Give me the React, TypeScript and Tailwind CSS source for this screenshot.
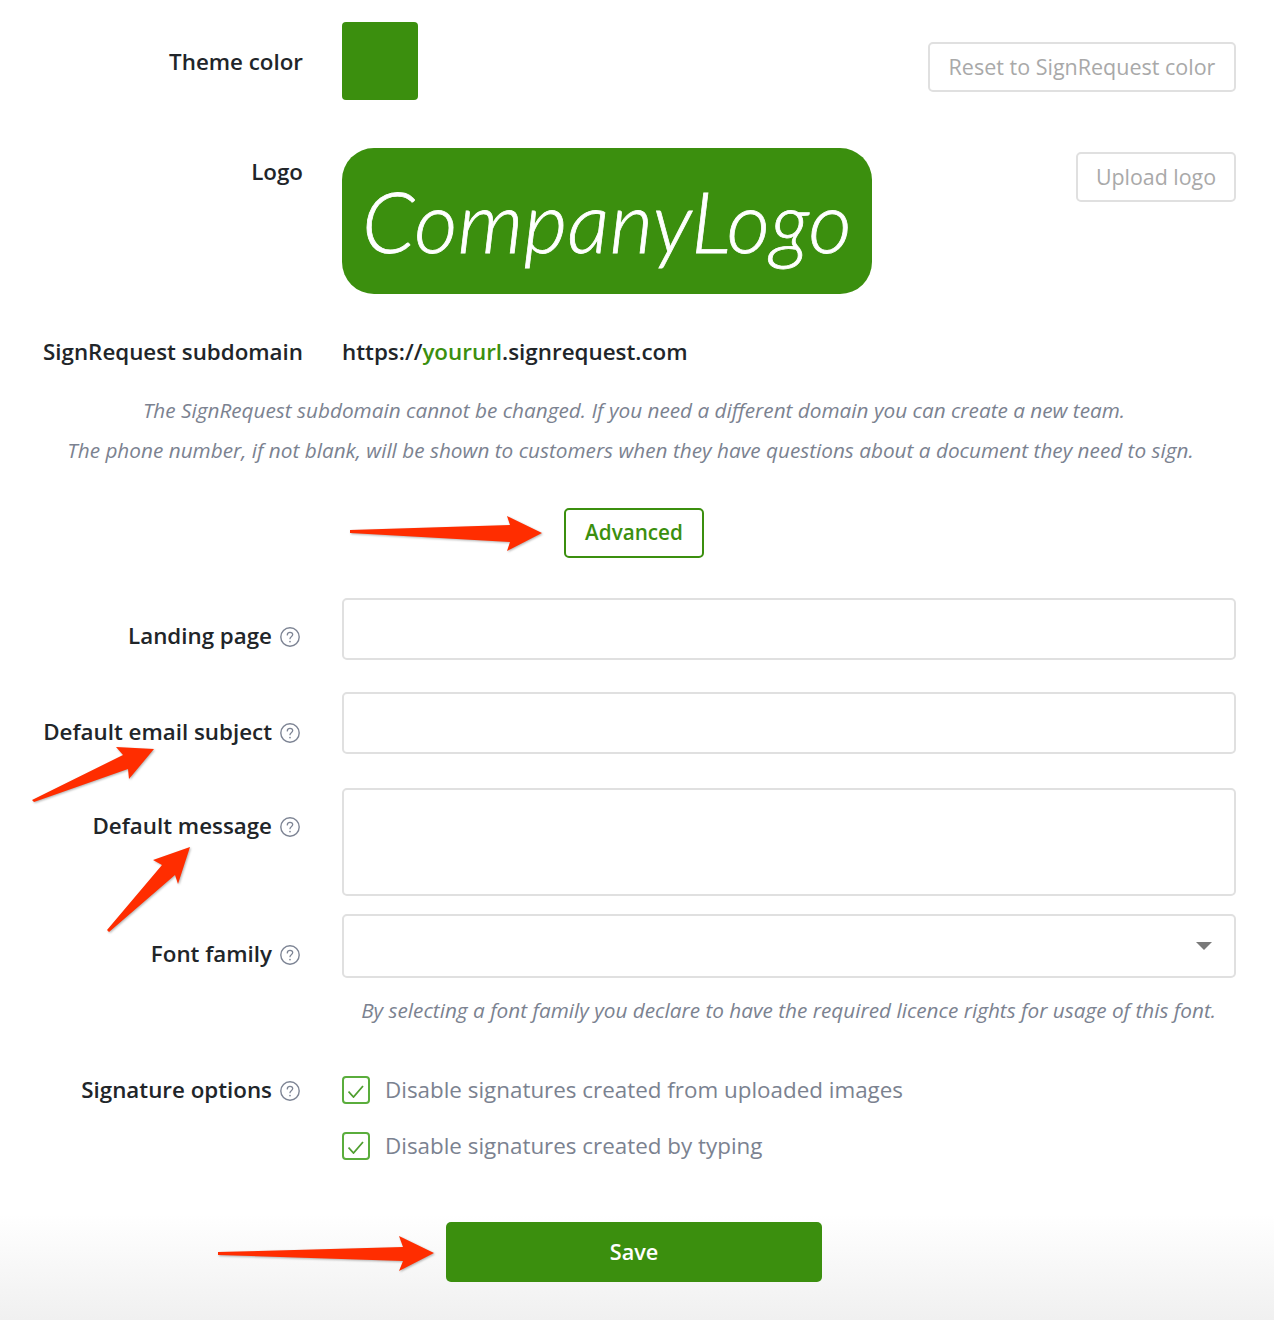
import React from "react";

const Help: React.FC = () => (
  <svg className="w-5 h-5 shrink-0 ml-2 mr-[3px]" viewBox="0 0 20 20" fill="none">
    <circle cx="10" cy="10" r="9.2" stroke="#7d8494" strokeWidth="1.4" />
    <path
      d="M7.3 7.9c0-1.6 1.1-2.6 2.7-2.6s2.7 1 2.7 2.3c0 2.1-2.7 2-2.7 4.1"
      stroke="#7d8494"
      strokeWidth="1.3"
      strokeLinecap="round"
    />
    <circle cx="10" cy="14.6" r="0.85" fill="#7d8494" />
  </svg>
);

const Check: React.FC<{ label: string; className?: string }> = ({ label, className }) => (
  <div className={`flex items-center ${className ?? ""}`}>
    <span className="w-7 h-7 rounded-[4px] border-2 border-[#5aad3c] flex items-center justify-center">
      <svg className="w-4 h-4" viewBox="0 0 16 16" fill="none">
        <path d="M0.5 9.5l5 5.5L15 4" stroke="#4f9e2f" strokeWidth="1.8" />
      </svg>
    </span>
    <span className="ml-[15px] text-[22.4px] leading-7 text-[#7b8290]">{label}</span>
  </div>
);

const Label: React.FC<{ text: string; help?: boolean; className?: string }> = ({ text, help, className }) => (
  <div className={`w-[303px] shrink-0 flex items-center justify-end font-semibold text-[22.35px] leading-8 text-[#212529] ${className ?? ""}`}>
    <span className={help ? "-translate-y-px" : ""}>{text}</span>
    {help && <Help />}
  </div>
);

const inputCls = "block flex-1 bg-white border-2 border-[#e0e0e0] rounded-[5px] ml-[39px]";

const App: React.FC = () => {
  return (
    <div className="relative w-[1274px] h-[1320px] overflow-hidden pt-[22px] pr-[38px] font-['Open_Sans',sans-serif] bg-gradient-to-b from-white from-[92%] to-[#f0f0f0]">
      {/* theme color */}
      <div className="flex items-start h-[78px]">
        <Label text="Theme color" className="mt-6" />
        <div className="w-[76px] h-[78px] ml-[39px] rounded-[4px] bg-[#3b8f0e]" />
        <button className="ml-auto mt-5 h-[50px] w-[308px] border-2 border-[#e0e0e0] rounded-[5px] text-[21.5px] leading-[44px] text-[#a9a9a9]">
          Reset to SignRequest color
        </button>
      </div>

      {/* logo */}
      <div className="flex items-start mt-[48px] h-[146px]">
        <Label text="Logo" className="mt-2" />
        <div className="w-[530px] h-[146px] ml-[39px] rounded-[32px] bg-[#3b8f0e] flex items-center justify-center">
          <span className="text-[84px] leading-none font-light italic text-white tracking-[0.45px] [-webkit-text-stroke:0.8px_white] font-['Lato',sans-serif]">
            CompanyLogo
          </span>
        </div>
        <button className="ml-auto mt-1 h-[50px] w-[160px] border-2 border-[#e0e0e0] rounded-[5px] text-[21.4px] leading-[44px] text-[#a9a9a9]">
          Upload logo
        </button>
      </div>

      {/* subdomain */}
      <div className="flex items-center mt-[42px] h-8">
        <Label text="SignRequest subdomain" />
        <div className="ml-[39px] text-[22.4px] font-semibold text-[#212529]">
          https://<span className="text-[#3b8f0e]">yoururl</span>.signrequest.com
        </div>
      </div>

      <div className="mt-[22px] pl-[25px] text-center italic text-[20.75px] leading-10 text-[#7b8290]">
        <p className="pl-[7px]">The SignRequest subdomain cannot be changed. If you need a different domain you can create a new team.</p>
        <p>The phone number, if not blank, will be shown to customers when they have questions about a document they need to sign.</p>
      </div>

      <div className="flex mt-[38px] pl-[564px]">
        <button className="w-[140px] h-[50px] border-2 border-[#3b8f0e] rounded-[5px] text-[20.7px] font-semibold text-[#3b8f0e]">
          Advanced
        </button>
      </div>

      {/* advanced fields */}
      <div className="flex items-start mt-10">
        <Label text="Landing page" help className="mt-[23px]" />
        <input className={`${inputCls} h-[62px]`} />
      </div>
      <div className="flex items-start mt-8">
        <Label text="Default email subject" help className="mt-[25px]" />
        <input className={`${inputCls} h-[62px]`} />
      </div>
      <div className="flex items-start mt-[34px]">
        <Label text="Default message" help className="mt-[23px]" />
        <textarea className={`${inputCls} h-[108px] resize-none`} />
      </div>
      <div className="flex items-start mt-[18px]">
        <Label text="Font family" help className="mt-[25px]" />
        <div className={`${inputCls} h-16 flex items-center justify-end pr-[22px]`}>
          <span className="w-0 h-0 border-x-[8px] border-x-transparent border-t-[8px] border-t-[#7a7a7a]" />
        </div>
      </div>
      <p className="mt-3 pr-5 text-right italic text-[20.75px] leading-10 text-[#7b8290]">
        By selecting a font family you declare to have the required licence rights for usage of this font.
      </p>

      {/* signature options */}
      <div className="flex items-start mt-[46px]">
        <Label text="Signature options" help className="-mt-px" />
        <div className="ml-[39px]">
          <Check label="Disable signatures created from uploaded images" />
          <Check label="Disable signatures created by typing" className="mt-7" />
        </div>
      </div>

      <div className="flex mt-[62px] pl-[446px]">
        <button className="w-[376px] h-[60px] rounded-[5px] bg-[#3b8f0e] text-white text-[21.7px] font-semibold">
          Save
        </button>
      </div>

      {/* annotation arrows */}
      <svg className="absolute inset-0 pointer-events-none" width="1274" height="1320" viewBox="0 0 1274 1320">
        <g fill="#ff2d00" style={{ filter: "drop-shadow(1px 1.5px 1px rgba(0,0,0,0.3))" }}>
          <polygon points="350,530 510,525 507,516 542,533 507,551 510,542 350,533" />
          <polygon points="32,800 123,755 116,747 154,749 129,779 128,769 34,802" />
          <polygon points="107,930 162,865 153,860 190,847 178,884 175,875 109,932" />
          <polygon points="218,1252 403,1247 399,1236 434,1253 399,1271 403,1261 218,1255" />
        </g>
      </svg>
    </div>
  );
};

export default App;
